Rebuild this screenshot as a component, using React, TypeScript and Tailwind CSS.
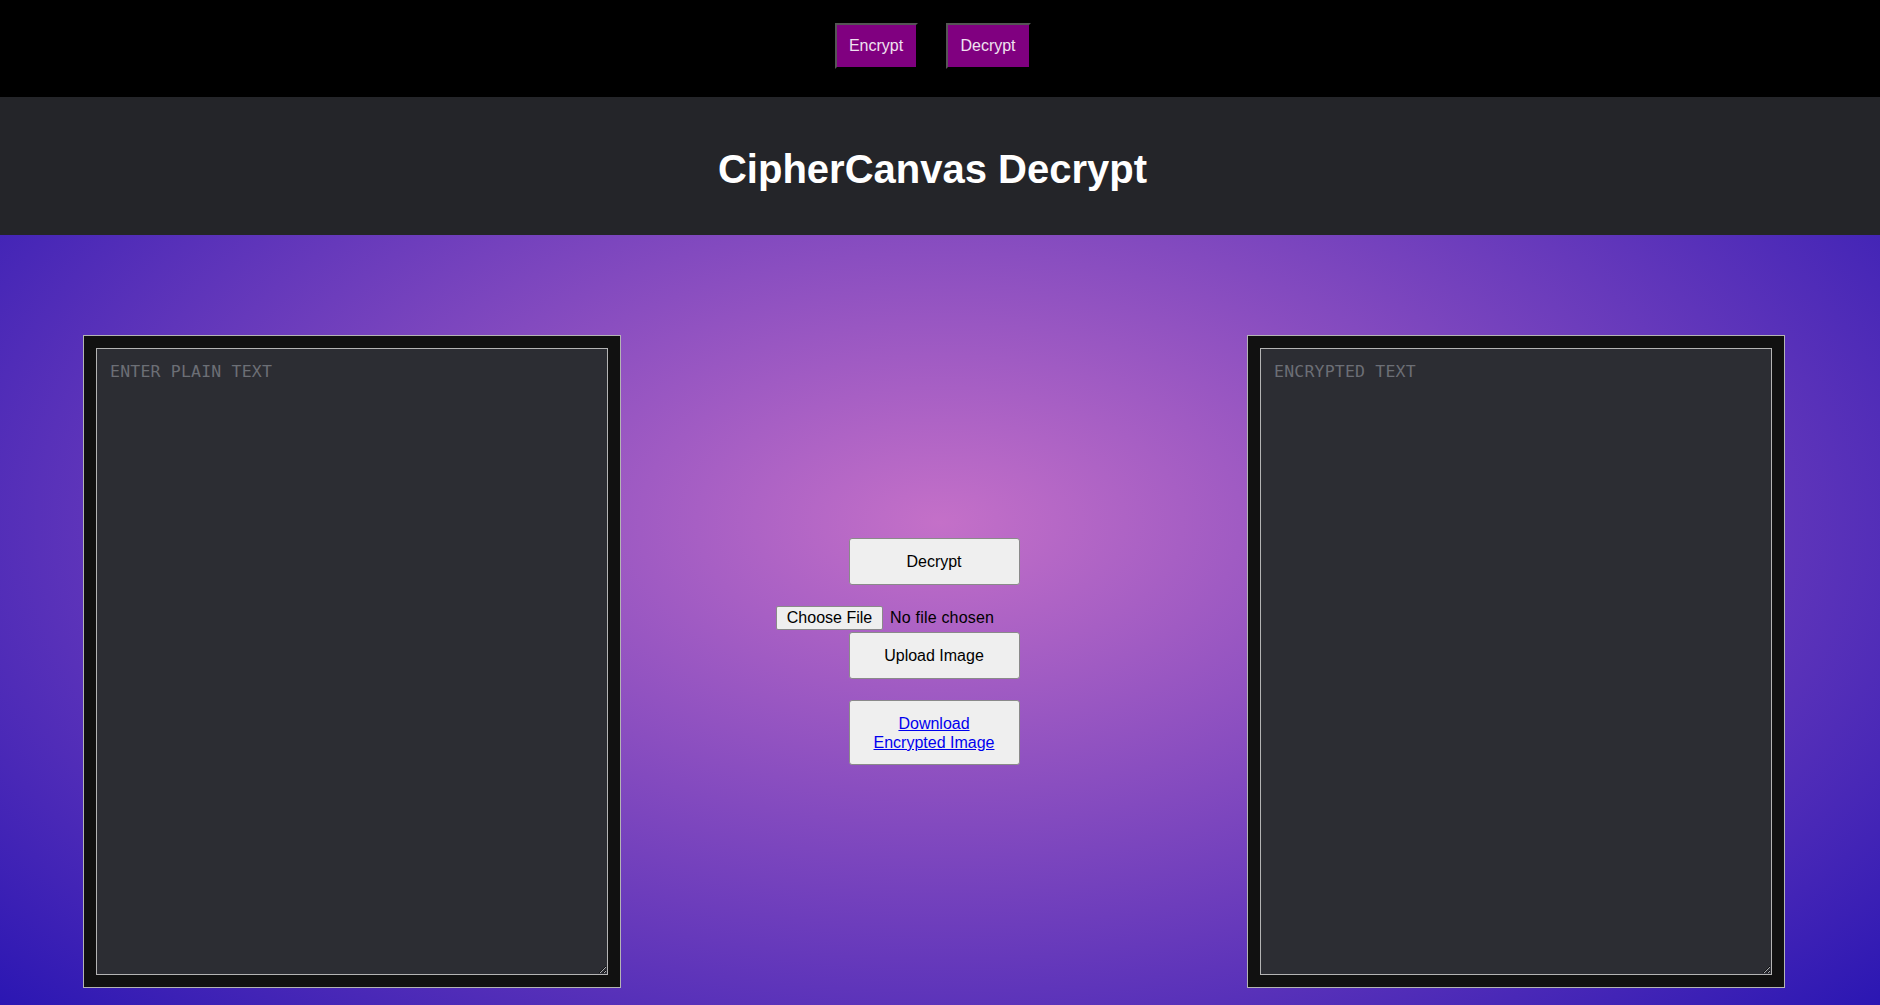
export default function App() {
  const sans = "font-['Liberation_Sans',Arial,sans-serif]";

  return (
    <div
      className={`${sans} w-full h-[1005px] overflow-hidden bg-[radial-gradient(ellipse_at_50%_52%,#c470c8_0%,#2513b2_100%)]`}
    >
      {/* nav */}
      <nav className="bg-black h-[97px] w-full">
        <div className="w-[1865px] flex justify-center gap-[28px] pt-[23px]">
          <button className="w-[83px] h-[46px] flex items-center justify-center bg-[#800080] text-[#f0e2f0] text-base border-2 border-t-[#555] border-l-[#555] border-r-black border-b-black">
            Encrypt
          </button>
          <button className="w-[85px] h-[46px] flex items-center justify-center bg-[#800080] text-[#f0e2f0] text-base border-2 border-t-[#555] border-l-[#555] border-r-black border-b-black">
            Decrypt
          </button>
        </div>
      </nav>

      {/* header */}
      <header className="bg-[#242529] w-full h-[138px]">
        <h1 className="w-[1865px] text-center text-white font-bold text-[40px] leading-[46px] pt-[49px]">
          CipherCanvas Decrypt
        </h1>
      </header>

      {/* main */}
      <main className="w-[1865px] flex justify-between items-start pt-[100px] pl-[83px] pr-[80px]">
        <div className="w-[538px] h-[653px] bg-[#111111] border border-[#b4b4b4] p-[12px]">
          <textarea
            placeholder="ENTER PLAIN TEXT"
            className="w-full h-full bg-[#2c2d33] border border-[#b4b4b4] px-[13px] pt-[11px] pb-[13px] text-[16.5px] tracking-[0.2px] text-[#ccc] font-['DejaVu_Sans_Mono',monospace] placeholder:text-[#6c6f76] outline-none"
          />
        </div>

        <div className="w-[316px] mt-[203px] flex flex-col items-center">
          <button className="w-[171px] h-[47px] bg-[#efefef] border border-[#8a8a8a] rounded-[3px] text-base text-black">
            Decrypt
          </button>

          <label className="self-start mt-[21px] flex items-center h-[24px] text-base text-black">
            <span className="w-[107px] h-[24px] flex items-center justify-center bg-[#efefef] border border-[#8a8a8a] rounded-[2px]">
              Choose File
            </span>
            <span className="ml-[7px] tracking-[0.2px]">No file chosen</span>
            <input type="file" className="hidden" />
          </label>

          <button className="mt-[2px] w-[171px] h-[47px] bg-[#efefef] border border-[#8a8a8a] rounded-[3px] text-base text-black">
            Upload Image
          </button>

          <div className="mt-[21px] w-[171px] h-[65px] bg-[#efefef] border border-[#8a8a8a] rounded-[3px] flex items-center justify-center px-[20px] text-center">
            <a href="#" className="text-base leading-[19px] text-[#0000ee] underline">
              Download Encrypted Image
            </a>
          </div>
        </div>

        <div className="w-[538px] h-[653px] bg-[#111111] border border-[#b4b4b4] p-[12px]">
          <textarea
            placeholder="ENCRYPTED TEXT"
            className="w-full h-full bg-[#2c2d33] border border-[#b4b4b4] px-[13px] pt-[11px] pb-[13px] text-[16.5px] tracking-[0.2px] text-[#ccc] font-['DejaVu_Sans_Mono',monospace] placeholder:text-[#6c6f76] outline-none"
          />
        </div>
      </main>
    </div>
  );
}
